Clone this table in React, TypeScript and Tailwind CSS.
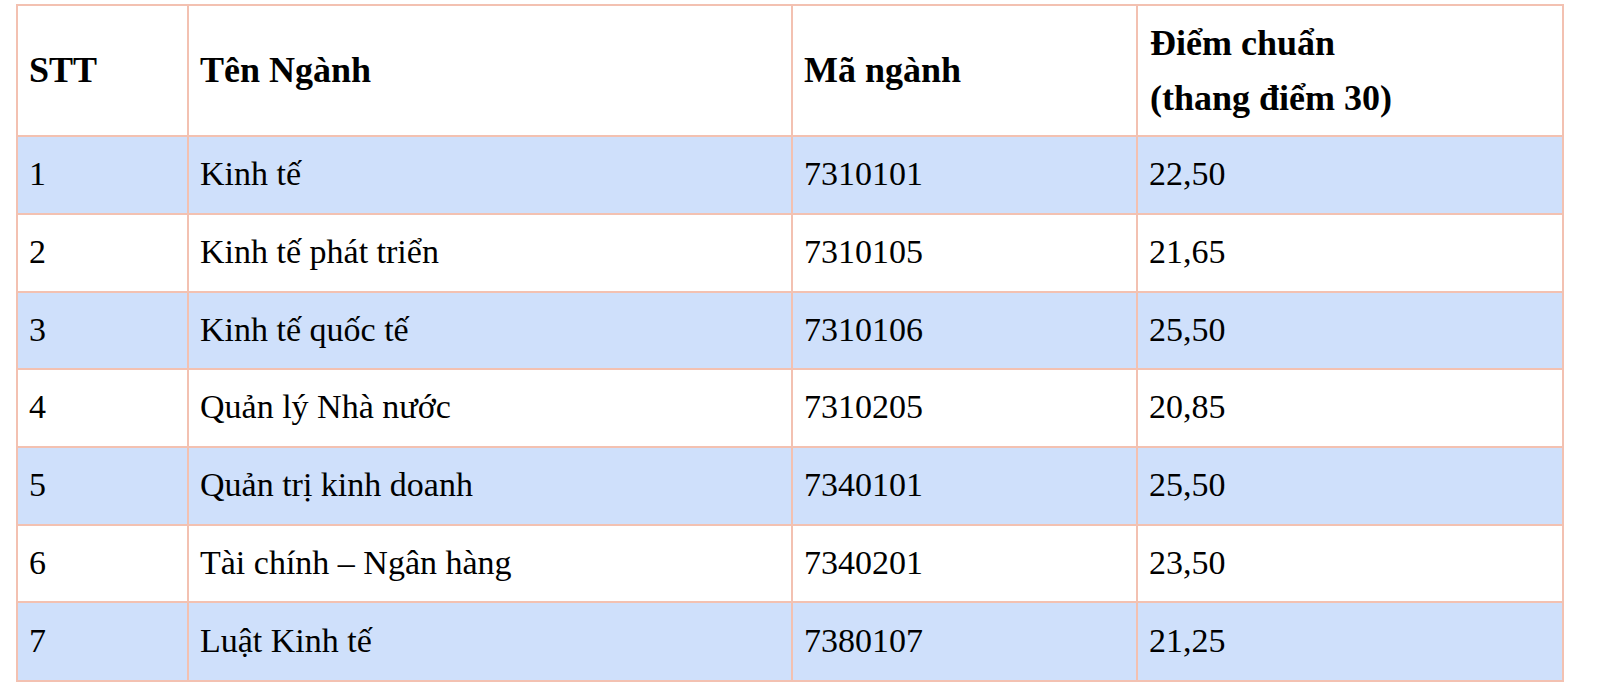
import React from "react";

const rows = [
  ["1", "Kinh tế", "7310101", "22,50"],
  ["2", "Kinh tế phát triển", "7310105", "21,65"],
  ["3", "Kinh tế quốc tế", "7310106", "25,50"],
  ["4", "Quản lý Nhà nước", "7310205", "20,85"],
  ["5", "Quản trị kinh doanh", "7340101", "25,50"],
  ["6", "Tài chính – Ngân hàng", "7340201", "23,50"],
  ["7", "Luật Kinh tế", "7380107", "21,25"],
];

const heights = ["h-[78px]", "h-[78px]", "h-[77px]", "h-[78px]", "h-[78px]", "h-[77px]", "h-[79px]"];

export default function App() {
  return (
    <div
      className="w-[1600px] h-[690px] bg-white text-black"
      style={{ fontFamily: '"Liberation Serif", "Times New Roman", serif' }}
    >
      <div className="pt-[4px] pl-[16px]">
        <div className="grid grid-cols-[171px_604px_345px_426px] w-[1548px] border-l-2 border-t-2 border-[#f3c1b1]">
          <div className="h-[131px] border-r-2 border-b-2 border-[#f3c1b1] flex items-center pl-[11px] font-bold text-[36px] leading-[47px]">
            STT
          </div>
          <div className="h-[131px] border-r-2 border-b-2 border-[#f3c1b1] flex items-center pl-[11px] font-bold text-[36px] leading-[47px]">
            Tên Ngành
          </div>
          <div className="h-[131px] border-r-2 border-b-2 border-[#f3c1b1] flex items-center pl-[11px] font-bold text-[36px] leading-[47px]">
            Mã ngành
          </div>
          <div className="h-[131px] border-r-2 border-b-2 border-[#f3c1b1] flex items-center pl-[12px] font-bold text-[36px] leading-[55px]">
            <div>
              Điểm chuẩn
              <br />
              (thang điểm 30)
            </div>
          </div>
          {rows.map((r, i) =>
            r.map((c, j) => (
              <div
                key={`${i}-${j}`}
                className={`${heights[i]} border-r-2 border-b-2 border-[#f3c1b1] flex items-center pl-[11px] pb-[2px] text-[34px] leading-[40px] ${
                  i % 2 === 0 ? "bg-[#cfe0fb]" : "bg-white"
                }`}
              >
                {c}
              </div>
            ))
          )}
        </div>
      </div>
    </div>
  );
}
